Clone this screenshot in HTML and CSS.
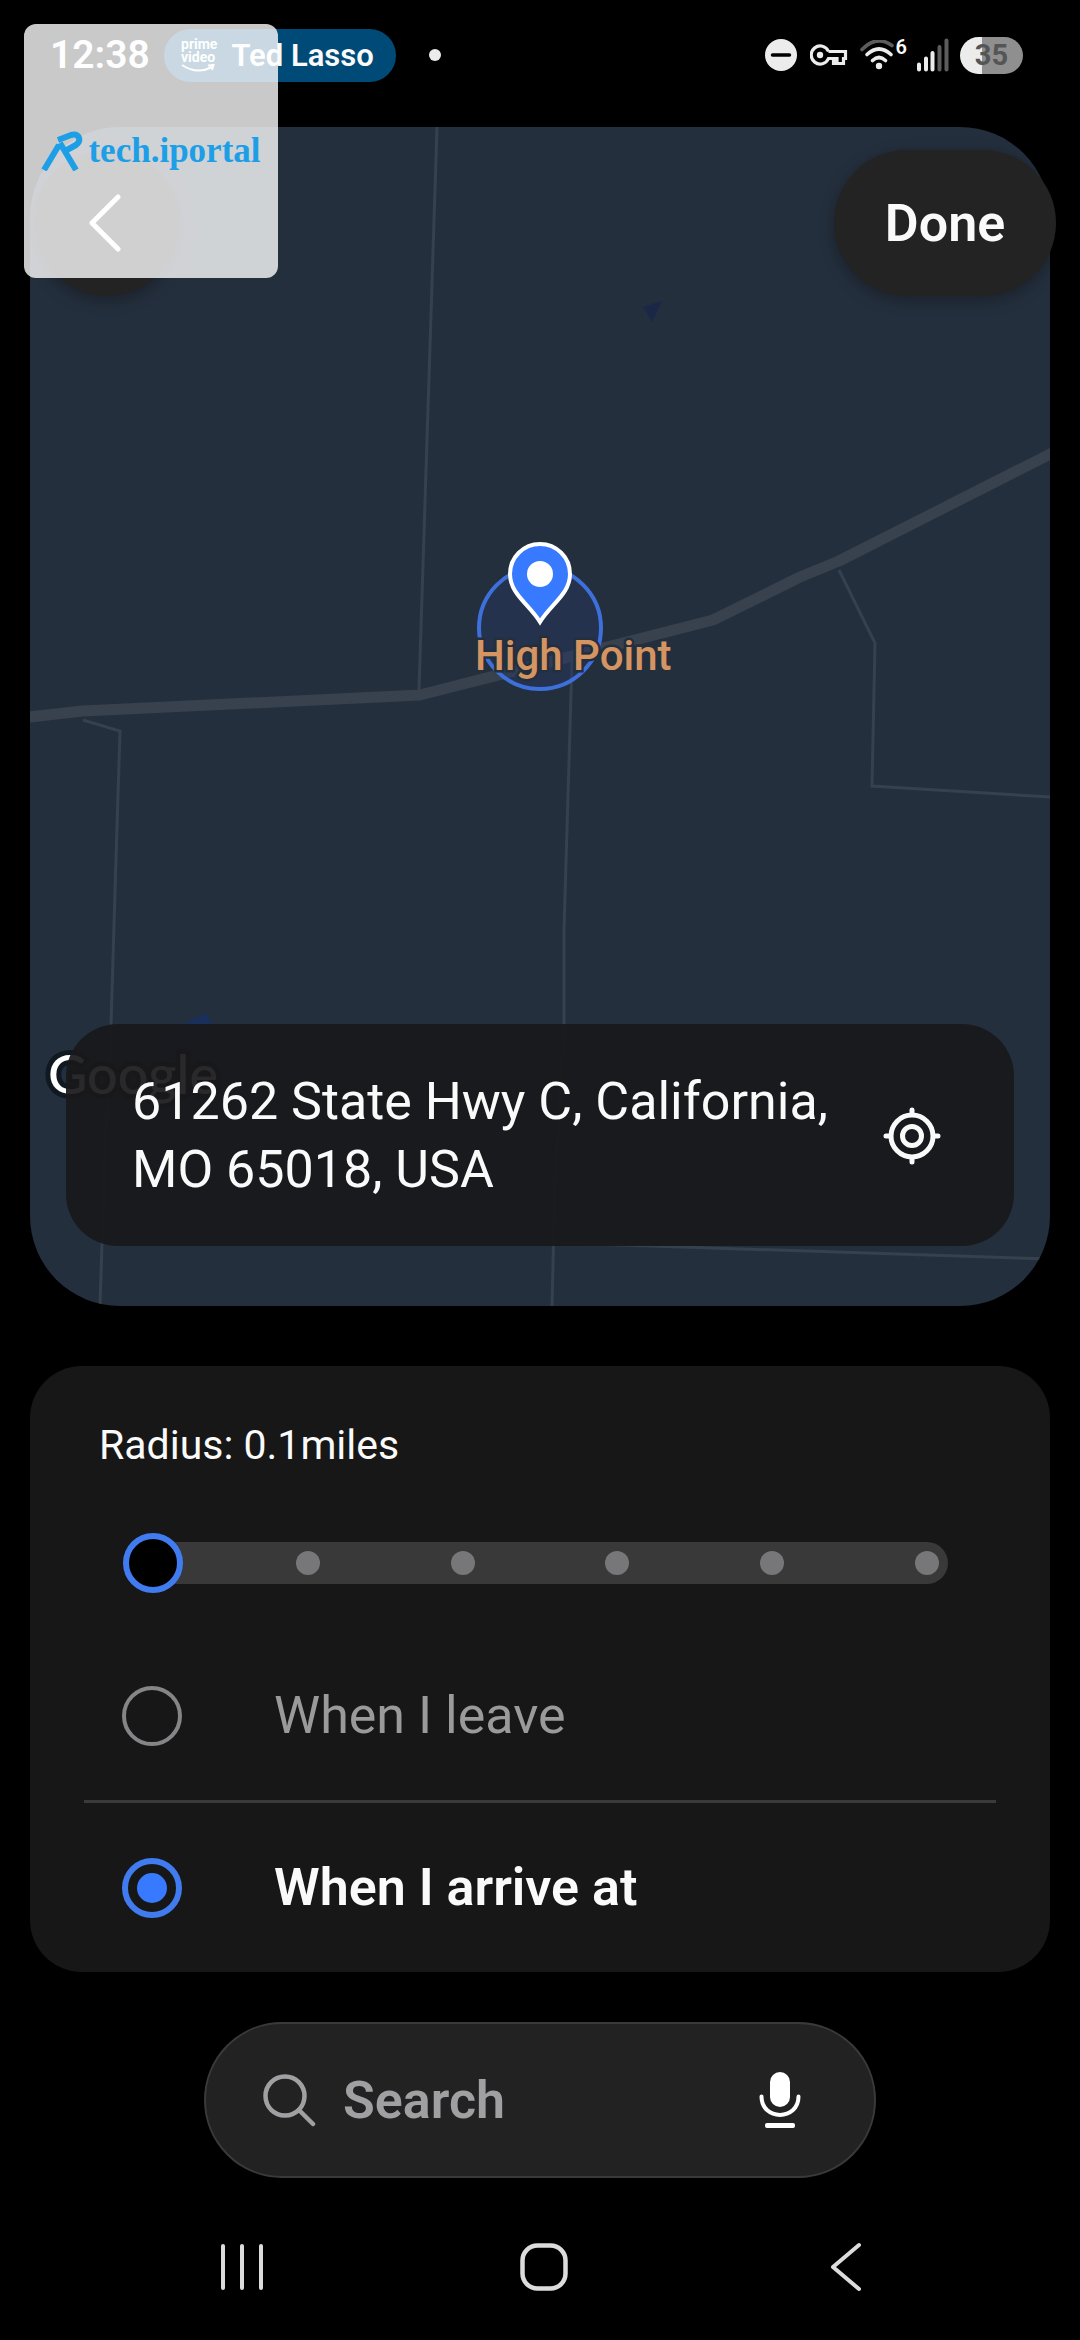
FILE: index.html
```
<!DOCTYPE html>
<html lang="en">
<head>
    <meta charset="UTF-8">
    <meta name="viewport" content="width=device-width, initial-scale=1.0">
    <title>Select location</title>
    <link rel="stylesheet" href="styles.css">
</head>
<body>
    <header class="status-bar">
        <span class="clock">12:38</span>
        <div class="chip">
            <span class="prime">
                <span>prime</span>
                <span>video</span>
                <svg width="34" height="9" viewBox="0 0 34 9"><path d="M1 1Q16 11 31 3M27 1.500L32.500 1L31 6" fill="none" stroke="currentColor" stroke-width="2"/></svg>
            </span>
            <span class="chip-text">Ted Lasso</span>
        </div>
        <span class="dot"></span>
        <div class="status-icons">
            <svg width="32" height="32" viewBox="0 0 32 32"><circle cx="16" cy="16" r="16" fill="#ececec"/><path d="M7.500 16H24.500" stroke="#000" stroke-width="3.500" stroke-linecap="round"/></svg>
            <svg class="key" width="38" height="22" viewBox="0 0 38 22"><path d="M18.500 7.500A9 9 0 1 0 18.500 14.500H23.500V19.500H26.500V14.500M18.500 7.500H35.500V14.500H33.500V19.500H27V14.500H22" fill="none" stroke="#ececec" stroke-width="3.200"/><circle cx="10" cy="11" r="3.200" fill="#ececec"/></svg>
            <svg class="wifi" width="34" height="30" viewBox="0 0 34 30"><g fill="none" stroke-width="3.600" stroke-linecap="round"><path d="M2 9.500Q17 -5.500 32 5.500" stroke="#5c5c5c"/><path d="M7 14.500Q19 3.500 31 14.500M12.500 20.500Q19 14.500 25.500 20.500" stroke="#ececec"/></g><circle cx="19" cy="26" r="3.200" fill="#ececec"/></svg>
            <span class="wifi-gen">6</span>
            <svg class="signal" width="32" height="34" viewBox="0 0 32 34"><g stroke-width="4" stroke-linecap="round"><path d="M2 26.500V31.500M9 20.500V31.500M15.500 15V31.500" stroke="#ececec"/><path d="M22.500 9V31.500M29.500 2.500V31.500" stroke="#5c5c5c"/></g></svg>
            <span class="battery">35</span>
        </div>
    </header>

    <main>
        <section class="map">
            <svg class="map-canvas" viewBox="30 127 1020 1179" preserveAspectRatio="xMidYMid slice">
                <rect x="30" y="127" width="1020" height="1179" fill="#242f3d"/>
                <path d="M643 307L662 301L652 322Z" fill="#1a2747"/>
                <path d="M150 1040L206 1013L214 1028L180 1060Z" fill="#18305a"/>
                <!-- side roads -->
                <g fill="none" stroke="#36414e" stroke-width="3">
                    <path d="M437 127L419 690"/>
                    <path d="M83 720L120 731L116 859L111 1025L104 1180L100 1306"/>
                    <path d="M572 660L564 930L564 1040L555 1180L552 1306"/>
                    <path d="M839 570L875 643L872 786L1050 797"/>
                    <path d="M560 1243L1050 1259"/>
                </g>
                <!-- highway -->
                <path d="M20 718L83 711L420 695L713 620L800 577L839 561L1060 449" fill="none" stroke="#38424e" stroke-width="11" stroke-linejoin="round"/>
                <circle cx="540" cy="628" r="61" fill="#26366a" fill-opacity="0.400" stroke="#3e70dc" stroke-width="4"/>
                <text class="place" x="475" y="670">High Point</text>
                <path d="M540 622C529 604 510 594 510 574A30 30 0 0 1 570 574C570 594 551 604 540 622Z" fill="#387aff" stroke="#fff" stroke-width="4"/>
                <circle cx="540" cy="574" r="13" fill="#fff"/>
                <text class="google" x="48" y="1094">Google</text>
            </svg>

            <div class="address">
                <p>61262 State Hwy C, California, MO 65018, USA</p>
                <button class="icon-button" aria-label="Current location">
                    <svg width="58" height="58" viewBox="0 0 58 58"><g fill="none" stroke="#fafafa" stroke-width="5" stroke-linecap="round"><circle cx="29" cy="29" r="21"/><circle cx="29" cy="29" r="9.500"/><path d="M29 3V7M29 51V55M3 29H7M51 29H55"/></g></svg>
                </button>
            </div>
        </section>

        <section class="card">
            <label class="radius-label" for="radius">Radius: 0.1miles</label>
            <div class="slider">
                <div class="track"><i></i><i></i><i></i><i></i><i></i><i></i></div>
                <input type="range" id="radius" min="0" max="5" step="1" value="0">
            </div>
            <label class="option">
                <input type="radio" name="trigger" value="leave">
                <span>When I leave</span>
            </label>
            <hr>
            <label class="option">
                <input type="radio" name="trigger" value="arrive" checked>
                <span>When I arrive at</span>
            </label>
        </section>

        <form class="search">
            <svg width="54" height="54" viewBox="0 0 54 54"><g fill="none" stroke="#a0a0a3" stroke-width="4.500" stroke-linecap="round"><circle cx="23" cy="23" r="19.500"/><path d="M37 37L51 51"/></g></svg>
            <input type="search" placeholder="Search" aria-label="Search">
            <button type="button" class="icon-button" aria-label="Voice search">
                <svg width="42" height="58" viewBox="0 0 42 58"><rect x="11" y="1" width="20" height="35" rx="10" fill="#fff"/><path d="M2.500 25.500C2.500 50 39.500 50 39.500 25.500" fill="none" stroke="#fff" stroke-width="4" stroke-linecap="round"/><rect x="6" y="52" width="30" height="5" rx="2" fill="#fff"/></svg>
            </button>
        </form>
    </main>

    <nav class="nav-bar">
        <button class="icon-button" aria-label="Recents">
            <svg width="44" height="48" viewBox="0 0 44 48"><path d="M3 3V45M22 3V45M41 3V45" stroke="#dcdcdc" stroke-width="4" stroke-linecap="round"/></svg>
        </button>
        <button class="icon-button" aria-label="Home">
            <svg width="48" height="48" viewBox="0 0 48 48"><rect x="2.500" y="2.500" width="43" height="43" rx="15" fill="none" stroke="#dcdcdc" stroke-width="4.500"/></svg>
        </button>
        <button class="icon-button" aria-label="Back">
            <svg width="32" height="50" viewBox="0 0 32 50"><path d="M29 3L3 25L29 47" fill="none" stroke="#dcdcdc" stroke-width="4" stroke-linecap="round" stroke-linejoin="round"/></svg>
        </button>
    </nav>

    <button class="back-button" aria-label="Go back">
        <svg width="36" height="58" viewBox="0 0 36 58"><path d="M29 3L3 29L29 55" fill="none" stroke="#fff" stroke-width="5" stroke-linecap="round" stroke-linejoin="round"/></svg>
    </button>
    <button class="done-button">Done</button>

    <div class="watermark">
        <svg width="42" height="40" viewBox="0 0 42 40"><g fill="none" stroke="#1c9fe6" stroke-width="6"><path d="M3 39L18 14"/><path d="M35 39L19 12"/><path d="M17 9L30 4C38 2 41 9 35 14L24 20" stroke-linejoin="round"/></g></svg>
        <span>tech.iportal</span>
    </div>
</body>
</html>
```
FILE: styles.css
```
* {
    box-sizing: border-box;
}
body {
    margin: 0;
    position: relative;
    min-height: 100vh;
    background: #000;
    color: #fafafa;
    font-family: Roboto, "Liberation Sans", sans-serif;
    font-size: 52px;
}
svg {
    display: block;
    flex: none;
}
button {
    font-family: inherit;
    border: none;
    cursor: pointer;
}
.icon-button {
    padding: 0;
    background: none;
}

/* status bar */
.status-bar {
    display: flex;
    align-items: center;
    height: 127px;
    padding: 0 57px 17px 50px;
}
.clock {
    width: 114px;
    font-size: 39px;
    font-weight: 600;
}
.chip {
    display: flex;
    align-items: center;
    gap: 14px;
    height: 53px;
    padding: 0 22px 0 17px;
    border-radius: 27px;
    background: #004a78;
}
.prime {
    display: flex;
    flex-direction: column;
    font-size: 14px;
    line-height: 13px;
    font-weight: 700;
}
.chip-text {
    font-size: 31px;
    font-weight: 600;
}
.dot {
    width: 12px;
    height: 12px;
    margin-left: 33px;
    border-radius: 50%;
    background: #ececec;
}
.status-icons {
    display: flex;
    align-items: center;
    margin-left: auto;
}
.key {
    margin-left: 13px;
}
.wifi {
    margin-left: 12px;
}
.wifi-gen {
    align-self: flex-start;
    margin-left: 2px;
    font-size: 20px;
    line-height: 20px;
    font-weight: 600;
}
.signal {
    margin-left: 10px;
}
.battery {
    width: 63px;
    height: 37px;
    margin-left: 11px;
    border-radius: 19px;
    background: linear-gradient(to right, #ececec 35%, #8f8f8f 35%);
    color: #555;
    font-size: 29px;
    line-height: 37px;
    font-weight: 700;
    text-align: center;
}

/* map */
.map {
    display: grid;
    height: 1179px;
    margin: 0 30px;
    border-radius: 90px;
    overflow: hidden;
}
.map-canvas {
    grid-area: 1 / 1;
    width: 100%;
    height: 1179px;
}
.place {
    font-size: 42px;
    font-weight: 500;
    fill: #d59563;
    stroke: #242f3d;
    stroke-width: 5px;
    paint-order: stroke;
}
.google {
    font-family: Lato, sans-serif;
    font-size: 54px;
    font-weight: 500;
    fill: #fff;
    stroke: #101822;
    stroke-width: 10px;
    paint-order: stroke;
    stroke-linejoin: round;
}
.address {
    grid-area: 1 / 1;
    align-self: end;
    position: relative;
    display: flex;
    align-items: center;
    justify-content: space-between;
    gap: 40px;
    margin: 0 36px 60px;
    padding: 44px 73px 42px 66px;
    border-radius: 52px;
    background: rgba(25, 25, 27, 0.93);
}
.address p {
    max-width: 710px;
    margin: 0;
    line-height: 68px;
}
.back-button, .done-button {
    position: absolute;
    top: 150px;
    height: 146px;
    border-radius: 73px;
    background: #232323;
    box-shadow: 0 4px 16px rgba(0, 0, 0, 0.3);
}
.back-button {
    left: 34px;
    display: flex;
    align-items: center;
    justify-content: center;
    width: 146px;
    padding: 0;
}
.done-button {
    right: 24px;
    width: 222px;
    color: #fafafa;
    font-size: 52px;
    font-weight: 600;
}

/* radius and trigger */
.card {
    margin: 60px 30px 0;
    border-radius: 52px;
    background: #171717;
    overflow: hidden;
}
.radius-label {
    display: block;
    margin: 54px 69px 0;
    font-size: 41px;
    line-height: 50px;
}
.slider {
    display: grid;
    align-items: center;
    margin: 63px 93px 38px;
}
.track {
    grid-area: 1 / 1;
    display: flex;
    align-items: center;
    justify-content: space-between;
    height: 42px;
    margin: 0 9px;
    padding: 0 9px;
    border-radius: 21px;
    background: #393939;
}
.track i {
    width: 24px;
    height: 24px;
    border-radius: 50%;
    background: #777779;
}
.slider input {
    grid-area: 1 / 1;
    appearance: none;
    width: 100%;
    height: 60px;
    margin: 0;
    background: none;
}
.slider input::-webkit-slider-thumb {
    appearance: none;
    width: 60px;
    height: 60px;
    border: 6px solid #407bf0;
    border-radius: 50%;
    background: #000;
}
.option {
    display: flex;
    align-items: center;
    gap: 92px;
    height: 169px;
    padding: 0 92px;
    color: #9a9a9a;
}
.option input {
    appearance: none;
    display: grid;
    place-items: center;
    width: 60px;
    height: 60px;
    margin: 0;
    border: 4px solid #858588;
    border-radius: 50%;
}
.option input:checked {
    border: 6px solid #407bf0;
}
.option input:checked::before {
    content: "";
    width: 30px;
    height: 30px;
    border-radius: 50%;
    background: #387aff;
}
.option:has(:checked) {
    color: #fafafa;
    font-weight: 600;
}
hr {
    height: 3px;
    margin: 0 54px;
    border: none;
    background: #3a3a3a;
}

/* search */
.search {
    display: flex;
    align-items: center;
    gap: 27px;
    width: 672px;
    max-width: 100%;
    height: 156px;
    margin: 50px auto 0;
    padding: 0 73px 0 56px;
    border: 2px solid #3a3a3a;
    border-radius: 78px;
    background: #222;
}
.search input {
    flex: 1;
    min-width: 0;
    padding: 0;
    border: none;
    outline: none;
    background: none;
    color: #fafafa;
    font-family: inherit;
    font-size: 52px;
    font-weight: 600;
}
.search input::placeholder {
    color: #a0a0a3;
}

.nav-bar {
    display: grid;
    grid-template-columns: repeat(3, 1fr);
    place-items: center;
    height: 144px;
    margin-top: 17px;
    padding: 0 83px 0 91px;
}

.watermark {
    position: absolute;
    top: 24px;
    left: 24px;
    display: flex;
    align-items: center;
    justify-content: center;
    gap: 5px;
    width: 254px;
    height: 254px;
    border-radius: 12px;
    background: rgba(255, 255, 255, 0.79);
    color: #1c9fe6;
    font-family: "Liberation Serif", serif;
    font-size: 35px;
    font-weight: 700;
}
```
